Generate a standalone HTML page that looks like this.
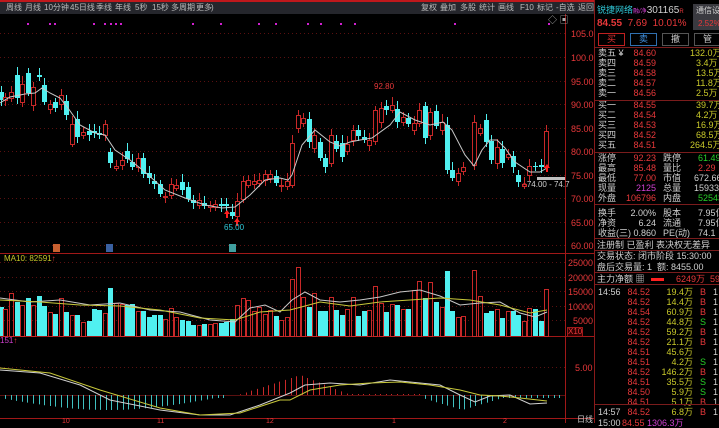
<!DOCTYPE html><html><head><meta charset="utf-8"><style>
body{margin:0;background:#000;width:719px;height:423px;overflow:hidden;font-family:"Liberation Sans","Noto Sans CJK SC",sans-serif;position:relative}
.t{position:absolute;white-space:nowrap;font-size:9px;line-height:10px}
.r{color:#e8383a}.y{color:#c8c82a}.g{color:#28d028}.w{color:#d0d0d0}.c{color:#30c8d8}.m{color:#d040d0}
#bar{position:absolute;left:0;top:0;width:595px;height:14px;background:#25262c;border-top:2px solid #c0181c;box-sizing:border-box}
#rp{position:absolute;left:594px;top:0;width:125px;height:423px;border-left:1px solid #8a1a1a}
.sep{position:absolute;left:595px;width:124px;height:1px;background:#7a1c1c}
.btn{position:absolute;top:33px;height:13px;width:27px;border:1px solid #555;box-sizing:border-box;font-size:9px;text-align:center;line-height:11px;color:#ccc}
.ra{text-align:right}
.tb{position:absolute;top:3px;font-size:8px;line-height:9px;color:#bbb;white-space:nowrap}
</style></head><body>
<svg id="sv" width="719" height="423" style="position:absolute;left:0;top:0"></svg>
<div id="bar"></div>
<div class="tb" style="left:6px">周线</div><div class="tb" style="left:25px">月线</div><div class="tb" style="left:44px">10分钟</div><div class="tb" style="left:70px">45日线</div><div class="tb" style="left:96px">季线</div><div class="tb" style="left:115px">年线</div><div class="tb" style="left:135px">5秒</div><div class="tb" style="left:152px">15秒</div><div class="tb" style="left:171px">多周期</div><div class="tb" style="left:196px">更多</div><div class="tb" style="left:211px">)</div>
<div class="tb" style="left:421px">复权</div><div class="tb" style="left:440px">叠加</div><div class="tb" style="left:460px">多股</div><div class="tb" style="left:479px">统计</div><div class="tb" style="left:498px">画线</div><div class="tb" style="left:520px">F10</div><div class="tb" style="left:537px">标记</div><div class="tb" style="left:556px">-自选</div><div class="tb" style="left:578px">返回</div>
<div class="t" style="left:548px;top:15px;color:#aaa">◇ ▣</div>
<div id="rp"></div>
<div class="t c" style="left:597px;top:5px;font-size:9px">锐捷网络<span class="m" style="font-size:6px">融/净</span><span class="w" style="font-size:10px">301165</span><span class="r" style="font-size:6px">R</span></div>
<div style="position:absolute;left:693px;top:4px;width:26px;height:26px;background:#3a3a40"></div>
<div class="t w" style="left:696px;top:6px;font-size:8px">通信设</div>
<div class="t r" style="left:698px;top:19px;font-size:8px">2.52%</div>
<div class="t r" style="left:597px;top:18px;font-size:10px;line-height:12px"><b>84.55</b>&nbsp; 7.69&nbsp; 10.01%</div>
<div class="btn" style="left:598px;border-color:#c02020;color:#e03030">买</div>
<div class="btn" style="left:630px;border-color:#3070b0;color:#4090e0">卖</div>
<div class="btn" style="left:662px">撤</div>
<div class="btn" style="left:694px">管</div>
<div id="ob"></div>
<script>
var sv=document.getElementById('sv'),h='';
function L(x1,y1,x2,y2,c,d){h+='<line x1="'+x1+'" y1="'+y1+'" x2="'+x2+'" y2="'+y2+'" stroke="'+c+'" stroke-width="1"'+(d?' stroke-dasharray="'+d+'"':'')+'/>';}
function P(pts,c){h+='<polyline fill="none" stroke="'+c+'" stroke-width="1" points="'+pts+'"/>';}
[33,57,81,104,128,151,175,198,222,245].forEach(function(y,i){L(0,y+.5,565,y+.5,'#5a1010','1 3');});
[262,277,291,306,320].forEach(function(y){L(0,y+.5,565,y+.5,'#5a1010','1 3');});
L(0,367.5,565,367.5,'#5a1010','1 3');
L(0,253.5,595,253.5,'#a01818');L(0,336.5,595,336.5,'#a01818');L(0,418.5,595,418.5,'#a01818');
L(565.5,14,565.5,423,'#a01818');
L(0,395.5,565,395.5,'#5a1010');
var C=[[1,92,100,1],[5,97,100,0],[11,92,98,0],[17,75,98,1],[22,84,102,0],[28,73,93,1],[33,87,105,0],[39,75,77,1],[44,85,102,1],[50,104,109,0],[55,102,108,1],[61,95,104,0],[66,101,115,1],[72,124,144,0],[77,119,137,1],[83,132,135,0],[89,131,135,1],[94,131,133,1],[99,133,135,1],[105,124,135,0],[110,152,163,1],[116,166,168,0],[122,160,165,0],[127,151,159,1],[132,162,167,1],[138,158,167,0],[143,158,174,1],[149,173,178,1],[154,181,184,1],[160,184,194,1],[165,196,197,0],[171,184,195,0],[176,185,188,0],[182,182,190,1],[188,187,199,1],[193,200,203,1],[199,200,205,0],[204,203,206,1],[210,205,207,0],[215,204,207,0],[221,204,206,1],[226,204,206,1],[232,212,216,1],[237,201,216,0],[243,181,199,0],[248,180,185,0],[254,181,184,0],[259,180,183,0],[265,174,180,0],[270,174,178,0],[276,176,183,1],[281,185,186,0],[287,181,186,0],[292,143,185,0],[298,115,128,0],[303,118,123,0],[309,119,142,1],[314,135,148,0],[320,142,158,1],[325,158,167,1],[331,135,163,0],[336,141,149,1],[342,143,157,1],[347,144,151,0],[353,130,140,0],[358,130,136,1],[364,137,140,1],[369,140,145,0],[375,110,141,0],[381,108,122,0],[386,106,110,1],[392,105,110,0],[397,109,122,1],[403,117,122,0],[408,118,124,1],[414,123,130,0],[419,110,123,0],[425,106,138,1],[430,112,135,0],[436,111,126,1],[442,122,130,0],[447,125,170,1],[452,170,178,1],[458,173,181,0],[463,167,171,0],[474,122,165,0],[480,128,133,0],[486,120,142,1],[491,141,160,1],[497,147,163,0],[502,149,163,1],[508,154,157,0],[513,156,167,1],[518,175,182,1],[524,184,186,0],[529,166,175,0],[535,166,167,1],[541,165,167,1],[546,131,167,0]];
var R='#c82828',B='#50f0f0';
C.forEach(function(c){var col=c[3]?B:R;var wt=c[1]-4-(c[0]*7%5),wb=c[2]+3+(c[0]*3%4);L(c[0]+.5,wt,c[0]+.5,wb,col);
 var hh=Math.max(1,c[2]-c[1]);
 if(c[3])h+='<rect x="'+(c[0]-2)+'" y="'+c[1]+'" width="5" height="'+hh+'" fill="'+B+'"/>';
 else h+='<rect x="'+(c[0]-1.5)+'" y="'+(c[1]+.5)+'" width="4" height="'+hh+'" fill="#000" stroke="'+R+'"/>';});
P('0,103 10,97 25,94 35,93 42,88 50,93 60,98 68,108 80,125 95,133 105,135 115,150 130,160 145,172 165,190 185,198 205,205 222,208 235,207 250,195 265,180 280,178 288,180 292,175 302,145 315,130 330,142 340,146 350,142 360,140 372,138 390,125 400,112 415,120 430,125 443,122 452,130 465,155 474,166 482,150 490,140 497,140 505,148 515,162 530,172 540,172 547,168','#c8c8c8');
var V={1:307,5:309,11:293,17:302,22:305,28:298,33:305,39:296,44:306,50:312,55:314,61:298,66:312,72:315,77:315,83:322,89:321,94:309,99:310,105:313,110:288,116:303,122:304,127:305,132:304,138:311,143:311,149:317,154:315,160:315,165:319,171:308,176:317,182:320,188:321,193:325,199:325,204:324,210:324,215:323,221:323,226:322,232:319,237:305,243:298,248:300,254:311,259:307,265:314,270:310,276:316,281:320,287:317,292:279,298:267,303:297,309:307,314:293,320:311,325:311,331:297,336:310,342:315,347:309,353:297,358:316,364:311,369:310,375:286,381:303,386:312,392:304,397:305,403:309,408:309,414:290,419:281,425:298,430:282,436:302,442:307,447:271,452:311,458:317,463:316,474:270,480:296,486:313,491:311,497:309,502:318,508:311,513:311,518:315,524:321,529:308,535:309,541:321,546:289};
C.forEach(function(c){var t=V[c[0]];if(!t)return;if(c[3])h+='<rect x="'+(c[0]-2)+'" y="'+t+'" width="5" height="'+(336-t)+'" fill="'+B+'"/>';else h+='<rect x="'+(c[0]-1.5)+'" y="'+(t+.5)+'" width="4" height="'+(336-t)+'" fill="none" stroke="'+R+'"/>';});
P('0,298 30,302 60,300 90,305 120,303 150,310 180,312 210,320 235,322 250,308 265,305 280,312 292,300 305,292 320,300 340,302 360,300 380,297 400,292 420,290 440,296 460,305 480,303 500,302 520,313 535,317 547,312','#c8c8c8');
P('0,300 40,302 80,305 120,306 160,310 200,318 235,320 260,312 290,310 320,302 350,306 380,302 410,300 440,298 470,300 500,305 530,313 547,310','#c8c83a');
for(var x=5;x<560;x+=5.6){var v=0;
 if(x<225)v=-(3+12*Math.sin(Math.PI*Math.min(1,x/215)));else if(x<238)v=0;else if(x<350)v=(x<300?(x-238)/62*20:20*(350-x)/50);else if(x<420)v=1;else{v=-(3+12*Math.max(0,1-Math.abs(x-462)/40));}
 var col=v>0?R:'#40c0c0';if(Math.abs(v)>0.5)L(Math.round(x)+.5,395,Math.round(x)+.5,395-v,col);}
P('0,370 40,373 80,385 110,400 160,410 200,415 230,415 260,405 290,393 305,385 330,383 360,385 390,380 410,382 440,385 460,395 475,402 490,396 510,395 530,404 547,403','#d0d0d0');
P('0,368 50,373 100,390 160,408 200,415 240,413 280,400 290,400 310,390 340,385 370,383 400,382 430,385 460,390 480,395 500,396 520,398 547,401','#c8c83a');
[27,49,54,93,104,110,115,120,192,220,258,275,307,320,340,354,454,548].forEach(function(x){h+='<rect x="'+x+'" y="23" width="2" height="2" fill="#d020d0"/>';});
h+='<rect x="53" y="244" width="7" height="8" fill="#c86030"/><rect x="106" y="244" width="7" height="8" fill="#3a60a0"/><rect x="229" y="244" width="7" height="8" fill="#40a0a0"/>';
h+='<rect x="537" y="177" width="28" height="3" fill="#c0c0c0"/>';
h+='<path d="M224 214l3-4 3 4h-2v4h-2v-4z" fill="#ff2020"/><path d="M234 222l3-4 3 4h-2v4h-2v-4z" fill="#ff2020"/><path d="M544 168l3-4 3 4h-2v4h-2v-4z" fill="#ff2020"/>';
sv.innerHTML=h;
var o='',rows=[['卖五 ¥','84.60','132.0万',53],['卖四','84.59','3.4万',63],['卖三','84.58','13.5万',73],['卖二','84.57','11.8万',83],['卖一','84.56','2.5万',93],['买一','84.55','39.7万',105],['买二','84.54','4.2万',115],['买三','84.53','16.9万',125],['买四','84.52','68.5万',135],['买五','84.51','264.5万',145]];
rows.forEach(function(r){o+='<div class="t w" style="left:598px;top:'+(r[3]-5)+'px">'+r[0]+'</div><div class="t r ra" style="left:620px;width:36px;top:'+(r[3]-5)+'px">'+r[1]+'</div><div class="t y" style="left:'+(r[2].length>5?690:696)+'px;top:'+(r[3]-5)+'px">'+r[2]+'</div>';});
var st=[['涨停','92.23','r','跌停','61.49','g',158],['最高','85.48','r','量比','2.29','r',168],['最低','77.00','r','市值','672.66','w',178],['现量','2125','m','总量','159339','w',188],['外盘','106796','r','内盘','52543','g',198],['换手','2.00%','w','股本','7.95亿','w',213],['净资','6.24','w','流通','7.95亿','w',223],['收益(三)','0.860','w','PE(动)','74.1','w',233]];
st.forEach(function(r){o+='<div class="t w" style="left:598px;top:'+(r[6]-5)+'px">'+r[0]+'</div><div class="t '+r[2]+' ra" style="left:615px;width:41px;top:'+(r[6]-5)+'px">'+r[1]+'</div><div class="t w" style="left:663px;top:'+(r[6]-5)+'px">'+r[3]+'</div><div class="t '+r[5]+'" style="left:'+(r[4].length>5?694:698)+'px;top:'+(r[6]-5)+'px">'+r[4]+'</div>';});
o+='<div class="t w" style="left:597px;top:240px">注册制 已盈利 表决权无差异</div><div class="t w" style="left:597px;top:251px">交易状态: 闭市阶段 15:30:00</div><div class="t w" style="left:597px;top:262px">盘后交易量: 1&nbsp; 额: 8455.00</div>';
o+='<div class="t w" style="left:597px;top:274px">主力净额 ▦</div><div style="position:absolute;left:651px;top:278px;width:13px;height:3px;background:#ff2020"></div><div class="t r" style="left:676px;top:274px">6249万&nbsp; 59</div>';
var tk=[['84.52','19.4万','B'],['84.52','14.4万','B'],['84.54','60.9万','B'],['84.52','44.8万','S'],['84.52','59.2万','B'],['84.52','21.1万','B'],['84.51','45.6万',''],['84.51','4.2万','S'],['84.52','146.2万','B'],['84.51','35.5万','S'],['84.50','5.9万','S'],['84.51','5.1万','B'],['84.52','6.8万','B']];
tk.forEach(function(r,i){var y=287+i*10;o+='<div class="t r ra" style="left:620px;width:30px;top:'+y+'px">'+r[0]+'</div><div class="t y ra" style="left:655px;width:38px;top:'+y+'px">'+r[1]+'</div><div class="t '+(r[2]=='B'?'r':'g')+'" style="left:700px;top:'+y+'px">'+r[2]+'</div><div class="t w" style="left:713px;top:'+y+'px">1</div>';});
o+='<div class="t w" style="left:598px;top:287px">14:56</div><div class="t w" style="left:598px;top:407px">14:57</div><div class="t w" style="left:598px;top:418px">15:00</div><div class="t r" style="left:622px;top:418px">84.55 <span class="m">1306.3万</span></div>';
document.getElementById('ob').innerHTML=o;
</script>
<div class="sep" style="top:47px"></div><div class="sep" style="top:100px"></div><div class="sep" style="top:152px"></div><div class="sep" style="top:204px"></div><div class="sep" style="top:238px"></div><div class="sep" style="top:250px"></div><div class="sep" style="top:272px"></div><div class="sep" style="top:284px"></div><div class="sep" style="top:404px"></div>
<div class="t r" style="left:571px;top:29px">105.0</div><div class="t r" style="left:571px;top:53px">100.0</div><div class="t r" style="left:571px;top:77px">95.00</div><div class="t r" style="left:571px;top:100px">90.00</div><div class="t r" style="left:571px;top:124px">85.00</div><div class="t r" style="left:571px;top:147px">80.00</div><div class="t r" style="left:571px;top:171px">75.00</div><div class="t r" style="left:571px;top:194px">70.00</div><div class="t r" style="left:571px;top:218px">65.00</div><div class="t r" style="left:571px;top:241px">60.00</div>
<div class="t r" style="left:568px;top:258px">25000</div><div class="t r" style="left:568px;top:273px">20000</div><div class="t r" style="left:568px;top:287px">15000</div><div class="t r" style="left:568px;top:302px">10000</div><div class="t r" style="left:573px;top:316px">5000</div><div class="t r" style="left:567px;top:327px;background:#300;border:1px solid #a01818;line-height:8px;font-size:8px">X10</div>
<div class="t r" style="left:575px;top:363px">5.00</div><div class="t w" style="left:577px;top:415px;font-size:8px">日线</div>
<div class="t r" style="left:374px;top:82px;font-size:8px">92.80</div><div class="t c" style="left:224px;top:223px;font-size:8px">65.00</div><div class="t w" style="left:522px;top:180px;font-size:8px"><span class="r">○</span>74.00 - 74.7</div>
<div class="t y" style="left:4px;top:254px;font-size:8px">MA10: 82591<span class="r">↑</span></div><div class="t m" style="left:0;top:336px;font-size:8px">151<span class="r">↑</span></div>
<div class="t r" style="left:62px;top:417px;font-size:7px">10</div><div class="t r" style="left:157px;top:417px;font-size:7px">11</div><div class="t r" style="left:266px;top:417px;font-size:7px">12</div><div class="t r" style="left:392px;top:417px;font-size:7px">1</div><div class="t r" style="left:503px;top:417px;font-size:7px">2</div>
</body></html>
